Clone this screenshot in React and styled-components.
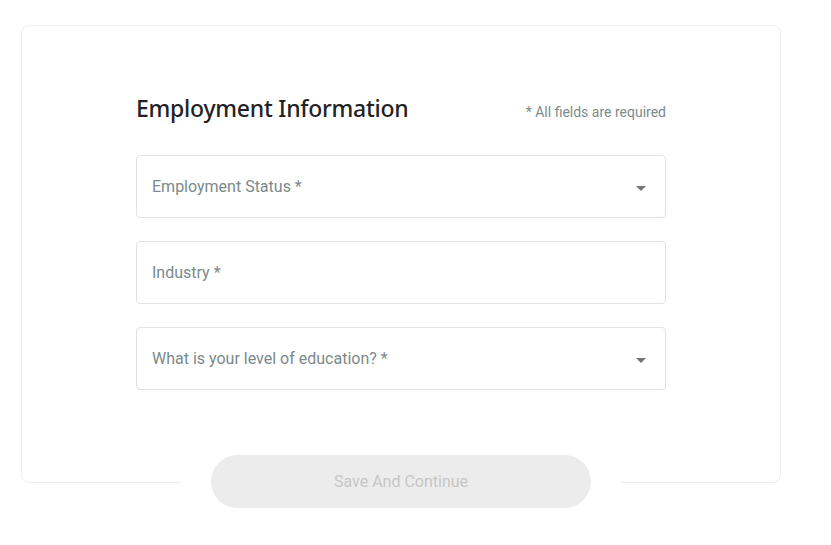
import styled, { createGlobalStyle } from 'styled-components'

const GlobalStyle = createGlobalStyle`
  body {
    margin: 0;
    background: #ffffff;
    font-family: Roboto, "Liberation Sans", sans-serif;
  }
`

const Page = styled.div`
  padding: 25px 50px 40px 21px;
`

const Card = styled.div`
  width: 760px;
  box-sizing: border-box;
  border: 1px solid #ececec;
  border-radius: 8px;
  padding-top: 67px;
  display: flex;
  flex-direction: column;
  align-items: center;
`

const Form = styled.div`
  width: 530px;
  display: flex;
  flex-direction: column;
  gap: 23px;
`

const Header = styled.div`
  display: flex;
  justify-content: space-between;
  align-items: baseline;
  margin-bottom: 9px;
`

const Title = styled.h2`
  margin: 0;
  font-family: "Noto Sans", "DejaVu Sans", sans-serif;
  font-weight: 500;
  font-size: 23px;
  line-height: 30px;
  letter-spacing: -0.25px;
  color: #1f2326;
`

const Note = styled.span`
  font-size: 14px;
  color: #7d8b8c;
`

const Field = styled.div`
  height: 63px;
  box-sizing: border-box;
  border: 1px solid #e2e2e2;
  border-radius: 4px;
  padding: 0 19px 0 15px;
  display: flex;
  align-items: center;
  justify-content: space-between;
  font-size: 16px;
  color: #7b8a8b;
`

const Caret = styled.span`
  width: 0;
  height: 0;
  border-left: 5px solid transparent;
  border-right: 5px solid transparent;
  border-top: 5px solid #757575;
  margin-top: 4px;
`

const Footer = styled.div`
  margin-top: 65px;
  margin-bottom: -26px;
  padding: 0 30px;
  background: #ffffff;
`

const Button = styled.button`
  width: 380px;
  height: 53px;
  border: none;
  border-radius: 27px;
  background: #ececec;
  color: #c6c6c6;
  font-family: Roboto, "Liberation Sans", sans-serif;
  font-size: 16px;
  cursor: not-allowed;
`

const SelectField = ({ label, select }) => (
  <Field>
    <span>{label}</span>
    {select && <Caret />}
  </Field>
)

export default function App() {
  return (
    <>
      <GlobalStyle />
      <Page>
        <Card>
          <Form>
            <Header>
              <Title>Employment Information</Title>
              <Note>* All fields are required</Note>
            </Header>
            <SelectField label="Employment Status *" select />
            <SelectField label="Industry *" />
            <SelectField label="What is your level of education? *" select />
          </Form>
          <Footer>
            <Button disabled>Save And Continue</Button>
          </Footer>
        </Card>
      </Page>
    </>
  )
}
